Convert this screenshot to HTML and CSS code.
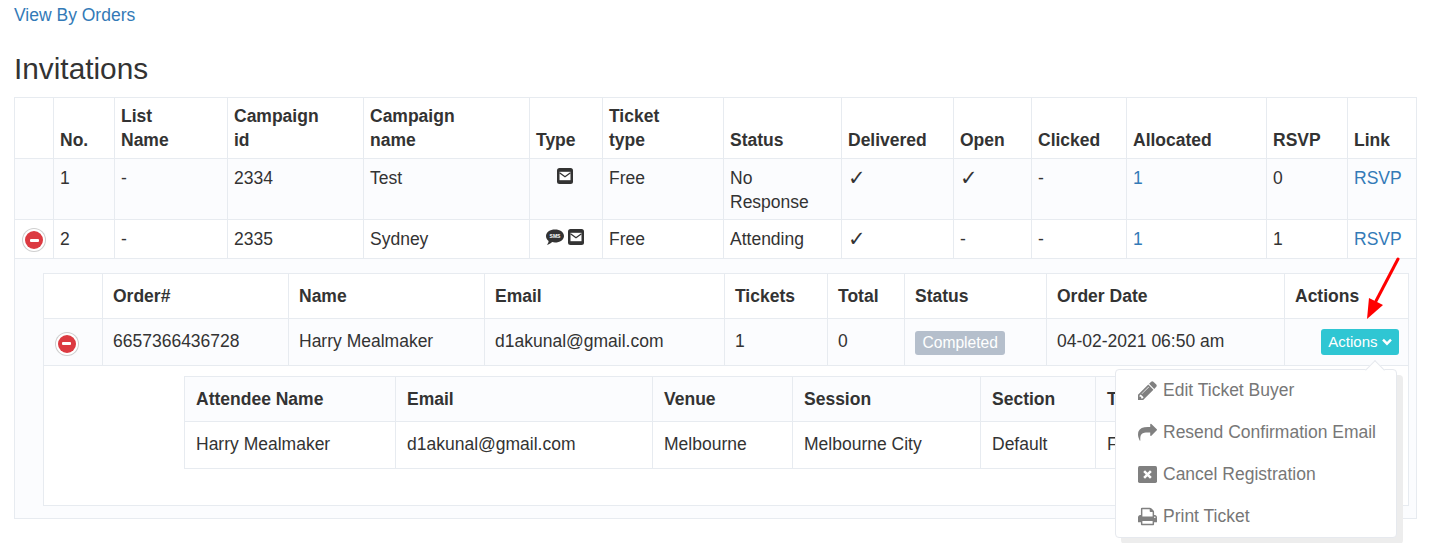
FILE: index.html
```html
<!DOCTYPE html>
<html lang="en">
<head>
<meta charset="utf-8">
<title>Invitations</title>
<link rel="stylesheet" href="styles.css">
</head>
<body>
<main class="page">
  <a class="link top-link" href="#">View By Orders</a>
  <h2 class="title">Invitations</h2>
  <table class="grid outer">
    <colgroup>
      <col class="o1"><col class="o2"><col class="o3"><col class="o4"><col class="o5"><col class="o6"><col class="o7"><col class="o8"><col class="o9"><col class="o10"><col class="o11"><col class="o12"><col class="o13"><col class="o14">
    </colgroup>
    <thead>
      <tr>
        <th></th><th>No.</th><th>List<br>Name</th><th>Campaign<br>id</th><th>Campaign<br>name</th><th>Type</th><th>Ticket<br>type</th><th>Status</th><th>Delivered</th><th>Open</th><th>Clicked</th><th>Allocated</th><th>RSVP</th><th>Link</th>
      </tr>
    </thead>
    <tbody>
      <tr class="tint">
        <td></td><td>1</td><td>-</td><td>2334</td><td>Test</td>
        <td class="center">
          <svg class="type-icon" viewBox="0 0 16 16"><rect x="0" y="0" width="16" height="16" rx="2.5" fill="#333"/><path d="M2.500 3.800h11v8.400h-11z" fill="#fff"/><path d="M2.500 4.800L8 8.800l5.500-4" fill="none" stroke="#333" stroke-width="1.300"/></svg>
        </td>
        <td>Free</td><td>No<br>Response</td><td><span class="tick">✓</span></td><td><span class="tick">✓</span></td><td>-</td><td><a class="link" href="#">1</a></td><td>0</td><td><a class="link" href="#">RSVP</a></td>
      </tr>
      <tr class="compact">
        <td class="toggle-cell"><span class="toggle"><span class="toggle-bar"></span></span></td><td>2</td><td>-</td><td>2335</td><td>Sydney</td>
        <td class="center">
          <svg class="sms-icon" viewBox="0 0 18 16"><path d="M9 .5c5 0 9 2.700 9 6.500s-4 6.500-9 6.500c-1 0-2-.1-2.900-.4C4.800 14.600 2.800 15.600.8 15.800c1-1 1.700-2.300 1.800-3.900C1 10.700 0 9 0 7 0 3.200 4 .5 9 .5z" fill="#333"/><text x="9" y="9" class="sms-text">SMS</text></svg>
          <svg class="type-icon" viewBox="0 0 16 16"><rect x="0" y="0" width="16" height="16" rx="2.5" fill="#333"/><path d="M2.500 3.800h11v8.400h-11z" fill="#fff"/><path d="M2.500 4.800L8 8.800l5.500-4" fill="none" stroke="#333" stroke-width="1.300"/></svg>
        </td>
        <td>Free</td><td>Attending</td><td><span class="tick">✓</span></td><td>-</td><td>-</td><td><a class="link" href="#">1</a></td><td>1</td><td><a class="link" href="#">RSVP</a></td>
      </tr>
      <tr class="tint">
        <td class="detail" colspan="14">
          <table class="grid orders">
            <colgroup>
              <col class="p1"><col class="p2"><col class="p3"><col class="p4"><col class="p5"><col class="p6"><col class="p7"><col class="p8"><col class="p9">
            </colgroup>
            <thead>
              <tr class="plain"><th></th><th>Order#</th><th>Name</th><th>Email</th><th>Tickets</th><th>Total</th><th>Status</th><th>Order Date</th><th>Actions</th></tr>
            </thead>
            <tbody>
              <tr class="tint order-row">
                <td class="toggle-cell"><span class="toggle"><span class="toggle-bar"></span></span></td>
                <td>6657366436728</td><td>Harry Mealmaker</td><td>d1akunal@gmail.com</td><td>1</td><td>0</td>
                <td><span class="badge">Completed</span></td>
                <td>04-02-2021 06:50 am</td>
                <td class="action-cell">
                  <button class="action-btn" type="button">Actions <svg class="chev" viewBox="0 0 10 8"><path d="M1 1.700l4 4 4-4" fill="none" stroke="#fff" stroke-width="2.400"/></svg></button>
                  <div class="menu">
                    <a class="menu-item" href="#"><svg class="menu-icon" viewBox="128 128 1536 1536"><path d="M491 1536l91-91-235-235-91 91v107h128v128h107zm523-928q0-22-22-22-10 0-17 7l-542 542q-7 7-7 17 0 22 22 22 10 0 17-7l542-542q7-7 7-17zm-54-192l416 416-832 832h-416v-416zm683 96q0 53-37 90l-166 166-416-416 166-165q36-38 90-38 53 0 91 38l235 234q37 39 37 91z"/></svg>Edit Ticket Buyer</a>
                    <a class="menu-item" href="#"><svg class="menu-icon" viewBox="0 0 1792 1792"><path d="M1792 640q0 26-19 45l-512 512q-19 19-45 19t-45-19-19-45v-256h-224q-98 0-175.500 6t-154 21.500-133 42.500-105.500 69.500-80 101-48.500 138.500-17.500 181q0 55 5 123 0 6 2.500 23.500t2.500 26.500q0 15-8.500 25t-23.500 10q-16 0-28-17-7-9-13-22t-13.500-30-10.500-24q-127-285-127-451 0-199 53-333 162-403 875-403h224v-256q0-26 19-45t45-19 45 19l512 512q19 19 19 45z"/></svg>Resend Confirmation Email</a>
                    <a class="menu-item" href="#"><svg class="menu-icon" viewBox="0 0 18 18"><rect x="0" y="1" width="18" height="16" rx="1.500"/><path d="M5.800 5.800l6.400 6.400M12.200 5.800l-6.400 6.400" stroke="#fff" stroke-width="2.400"/></svg>Cancel Registration</a>
                    <a class="menu-item" href="#"><svg class="menu-icon" viewBox="64 128 1664 1536"><path d="M448 1536h896v-256h-896v256zm0-640h896v-384h-160q-40 0-68-28t-28-68v-160h-640v640zm1152 64q0-26-19-45t-45-19-45 19-19 45 19 45 45 19 45-19 19-45zm128 0v416q0 13-9.500 22.500t-22.500 9.500h-224v160q0 40-28 68t-68 28h-960q-40 0-68-28t-28-68v-160h-224q-13 0-22.500-9.500t-9.500-22.500v-416q0-79 56.500-135.500t135.500-56.500h64v-544q0-40 28-68t68-28h672q40 0 88 20t76 48l152 152q28 28 48 76t20 88v256h64q79 0 135.500 56.500t56.500 135.500z"/></svg>Print Ticket</a>
                  </div>
                </td>
              </tr>
              <tr class="plain">
                <td class="nested-wrap" colspan="9">
                  <table class="grid attendees">
                    <colgroup>
                      <col class="q1"><col class="q2"><col class="q3"><col class="q4"><col class="q5"><col class="q6">
                    </colgroup>
                    <thead>
                      <tr class="tint"><th>Attendee Name</th><th>Email</th><th>Venue</th><th>Session</th><th>Section</th><th>Ticket Type</th></tr>
                    </thead>
                    <tbody>
                      <tr class="plain nested-row"><td>Harry Mealmaker</td><td>d1akunal@gmail.com</td><td>Melbourne</td><td>Melbourne City</td><td>Default</td><td>Free</td></tr>
                    </tbody>
                  </table>
                </td>
              </tr>
            </tbody>
          </table>
        </td>
      </tr>
    </tbody>
  </table>
  <svg class="arrow" viewBox="0 0 40 66"><path d="M34 2L12 44" stroke="#f00" stroke-width="3" fill="none" stroke-linecap="round"/><path d="M3 62L5 41 19 48z" fill="#f00"/></svg>
</main>
</body>
</html>
```
FILE: styles.css
```css
* { box-sizing: border-box; }
html, body { margin: 0; padding: 0; background: #fff; }
body {
  font-family: "Liberation Sans", Arial, sans-serif;
  font-size: 17.5px;
  line-height: 24px;
  color: #333;
  overflow: hidden;
}
.page { position: relative; height: 543px; padding: 3px 20px 0 14px; }
.link { color: #337ab7; text-decoration: none; }
.top-link { display: block; }
.title { margin: 25px 0 12px; font-size: 29.8px; line-height: 33px; font-weight: 400; color: #333; }

.grid { border-collapse: collapse; table-layout: fixed; }
.grid th, .grid td { border: 1px solid #e7ebf0; }
.grid th { font-weight: 700; text-align: left; vertical-align: bottom; }
.tint > td, .tint > th { background: #fbfcfe; }
.plain > td, .plain > th { background: #fff; }

.outer { width: 1402px; }
.outer > thead > tr > th { padding: 6px; vertical-align: bottom; }
.outer > tbody > tr > td { padding: 7px 6px 5px; vertical-align: top; }
.outer > tbody > tr.compact > td { height: 39px; }
.outer > tbody > tr > td.center { padding: 6px 7px 6px 5px; text-align: center; }
.outer > tbody > tr > td.toggle-cell { padding: 7px 0 0; text-align: center; }
.outer > tbody > tr > td.detail { padding: 14px 7px 12px 28px; }

.o1 { width: 39px; } .o2 { width: 61px; } .o3 { width: 113px; } .o4 { width: 136px; }
.o5 { width: 166px; } .o6 { width: 73px; } .o7 { width: 121px; } .o8 { width: 118px; }
.o9 { width: 112px; } .o10 { width: 78px; } .o11 { width: 95px; } .o12 { width: 140px; }
.o13 { width: 81px; } .o14 { width: 69px; }

.orders { width: 1365px; }
.orders > thead > tr > th, .orders > tbody > tr > td { padding: 10px; vertical-align: middle; }
.orders > thead > tr > th { height: 45px; }
.orders > tbody > tr.order-row > td { height: 47px; padding: 9px 10px 11px; }
.orders > tbody > tr > td.toggle-cell { padding: 0 13px 0 0; text-align: center; }
.orders > tbody > tr > td.nested-wrap { padding: 10px 11px 36px 140px; }

.p1 { width: 59px; } .p2 { width: 186px; } .p3 { width: 196px; } .p4 { width: 240px; }
.p5 { width: 103px; } .p6 { width: 77px; } .p7 { width: 142px; } .p8 { width: 238px; } .p9 { width: 124px; }

.attendees { width: 1214px; }
.attendees th, .attendees td { padding: 10px 11px; vertical-align: middle; }
.attendees th { height: 45px; }
.nested-row td { height: 47px; }
.attendees .nested-row td { padding: 9px 11px 11px; }
.q1 { width: 211px; } .q2 { width: 257px; } .q3 { width: 140px; } .q4 { width: 188px; } .q5 { width: 115px; } .q6 { width: 303px; }

.type-icon { width: 16px; height: 16px; display: inline-block; vertical-align: -1px; }
.sms-icon { width: 18px; height: 16px; display: inline-block; vertical-align: -1px; }
.sms-text { font-family: "Liberation Sans", Arial, sans-serif; font-size: 5px; font-weight: 700; fill: #fff; text-anchor: middle; }
.tick { font-family: "DejaVu Sans", sans-serif; font-size: 21px; line-height: 24px; color: #333; }

.toggle {
  display: inline-flex;
  align-items: center;
  justify-content: center;
  width: 18px;
  height: 18px;
  border-radius: 50%;
  background: #dc3a41;
  box-shadow: 0 0 0 2px #fff, 0 0 0 3px #cfcfcf;
  vertical-align: middle;
}
.toggle-bar { width: 9px; height: 3px; border-radius: 1px; background: #fff; }

.badge {
  display: inline-block;
  height: 24px;
  padding: 0 7.5px;
  font-size: 15.6px;
  line-height: 24px;
  color: #fff;
  background: #b5bfcc;
  border-radius: 3px;
  vertical-align: middle;
  position: relative;
  top: 1px;
}

.orders > tbody > tr > td.action-cell { position: relative; text-align: right; padding-right: 9px; }
.action-btn {
  height: 26px;
  width: 78px;
  padding: 0;
  border: 0;
  border-radius: 3px;
  background: #2fc6d3;
  color: #fff;
  font-family: inherit;
  font-size: 15px;
  line-height: 26px;
  vertical-align: middle;
  position: relative;
  top: 1px;
}
.chev { width: 10px; height: 8px; vertical-align: 1px; }

.menu {
  position: absolute;
  top: 50px;
  right: 11px;
  width: 282px;
  height: 169px;
  background: #fff;
  border: 1px solid #e6e9ee;
  border-radius: 4px;
  box-shadow: 6px 6px 0 #ededed;
  text-align: left;
  z-index: 5;
}
.menu::before {
  content: "";
  position: absolute;
  top: -7px;
  right: 14px;
  width: 13px;
  height: 13px;
  background: #fff;
  border-left: 1px solid #e6e9ee;
  border-top: 1px solid #e6e9ee;
  transform: rotate(45deg);
}
.menu-item {
  display: flex;
  align-items: center;
  height: 42px;
  padding-left: 22px;
  color: #777;
  text-decoration: none;
  font-size: 17.5px;
  position: relative;
  top: -1px;
}
.menu-icon { width: 19px; height: 19px; margin-right: 6px; fill: #808080; flex: none; }

.arrow { position: absolute; left: 1364px; top: 257px; width: 40px; height: 66px; z-index: 6; }
```
